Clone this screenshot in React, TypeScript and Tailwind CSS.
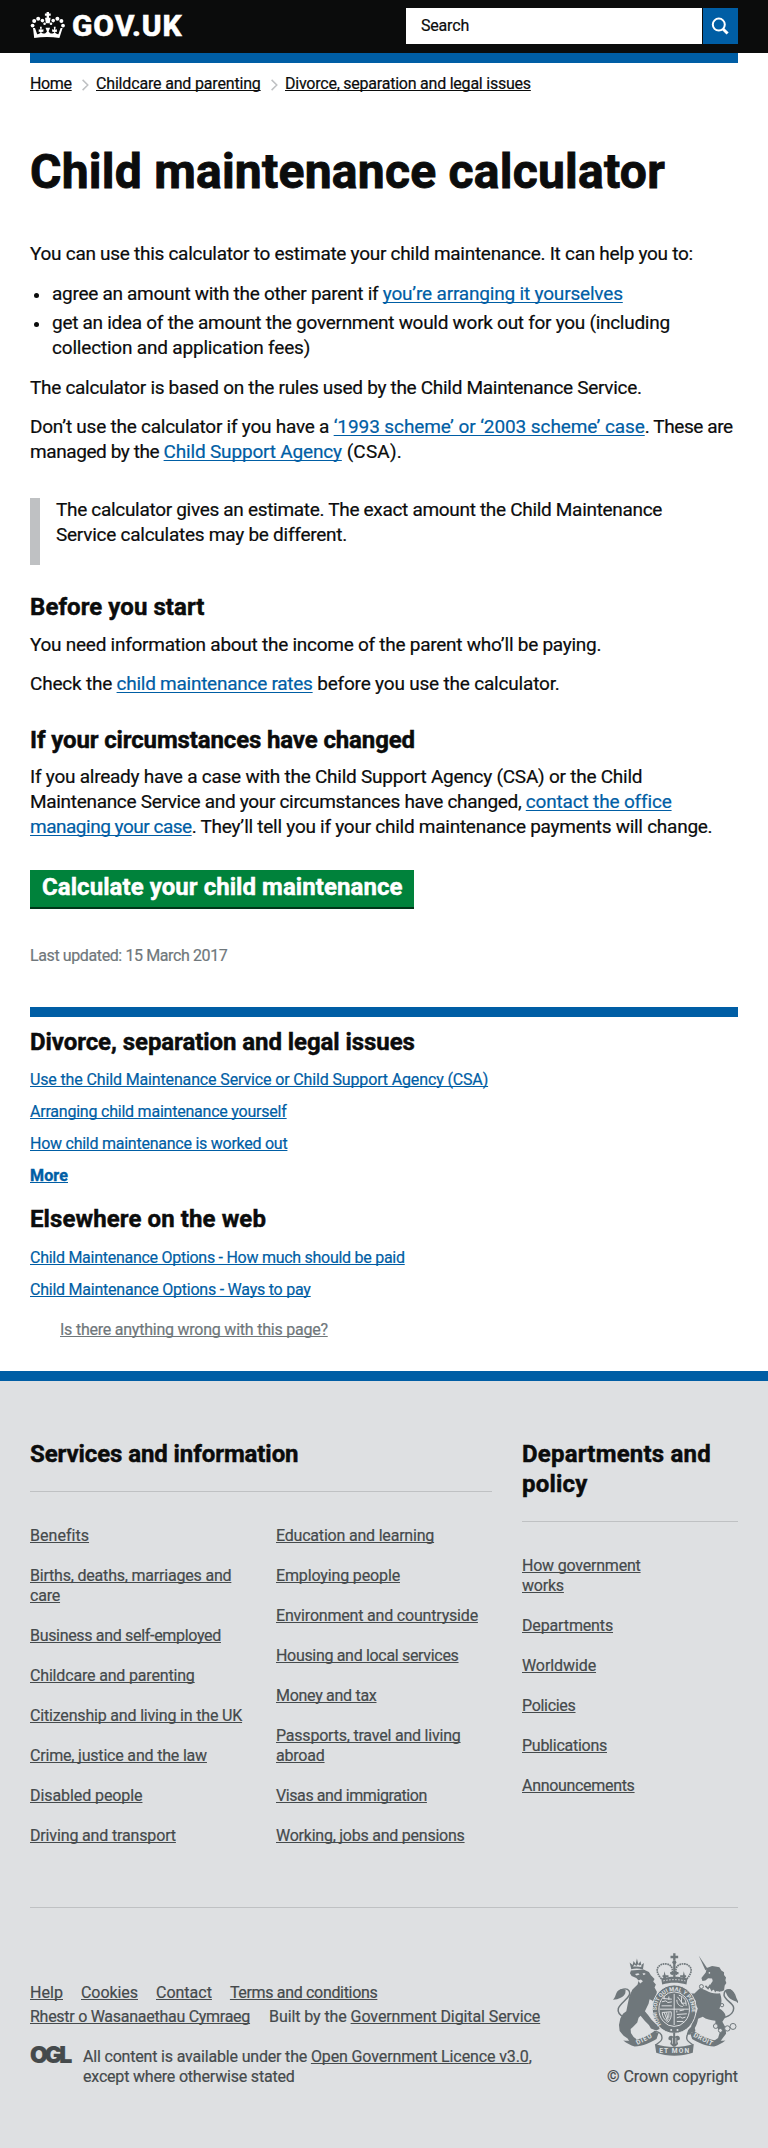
import type { ReactNode } from "react";

const linkBase = "underline decoration-1 [text-decoration-skip-ink:none]";
const headingBase = "text-[24px] leading-[30px] font-bold [-webkit-text-stroke:0.45px]";

function BodyLink({ t, children }: { t: string; children: ReactNode }) {
  return (
    <a href="#" className={`${linkBase} underline-offset-2 text-[#005ea5] ${t}`}>
      {children}
    </a>
  );
}

function SmallLink({ t, children }: { t: string; children: ReactNode }) {
  return (
    <a href="#" className={`${linkBase} underline-offset-1 ${t}`}>
      {children}
    </a>
  );
}

function Crown() {
  return (
    <svg width="36" height="27" viewBox="30 12 36 27" className="mt-[12px] shrink-0" fill="#fff">
      <path d="M46.6 12h2.4v1.6h1.7v2.2H49v2h1.6l-.9 5.4h-3.8l-.9-5.4h1.6v-2h-1.7v-2.2h1.7z" />
      <circle cx="32.6" cy="25.6" r="1.9" />
      <circle cx="34.2" cy="21" r="2" />
      <circle cx="38.2" cy="18.8" r="2" />
      <circle cx="42.4" cy="20.6" r="1.8" />
      <circle cx="44.6" cy="23.8" r="1.3" />
      <circle cx="51" cy="23.8" r="1.3" />
      <circle cx="53.2" cy="20.6" r="1.8" />
      <circle cx="57.4" cy="18.8" r="2" />
      <circle cx="61.4" cy="21" r="2" />
      <circle cx="63" cy="25.6" r="1.9" />
      <path d="M33 28h2l2.200 6.200c1.600.1 3-.8 3.400-2.200l-2-.2.2-2.600 1.600.5-.5-3h1.900l-.3 3 2-.5-.1 2.600-2.300.2c1 1.600 3 2 4.600 1l1.300-1.500-1.500-3.800h4.600l-1.500 3.800 1.300 1.500c1.600 1 3.600.6 4.600-1l-2.300-.2-.1-2.600 2 .5-.3-3h1.900l-.5 3 1.600-.5.2 2.600-2 .2c.4 1.400 1.800 2.300 3.400 2.200l2.200-6.200h2l-3.200 10c-8-1.200-17-1.200-25.200 0z" />
    </svg>
  );
}

function Chevron() {
  return (
    <svg width="7" height="12" viewBox="0 0 7 12" className="mt-[5px] shrink-0" fill="none" stroke="#bfc1c3" strokeWidth="1.5">
      <path d="M.6.9 5.800 6 .6 11.100" />
    </svg>
  );
}

function Crest() {
  return (
    <svg width="125" height="103" viewBox="68 68 376 308" className="block [-webkit-text-stroke:0]" fill="#6f777b" stroke="none">
      <defs>
        <path id="garter" d="M213 282A53 60 0 1 1 291 282" />
      </defs>

      {/* lion */}
      <path d="M123 116l-5-20 9 7 3-12 6 9 4-16 4 16 7-8 2 11 8-6-3 20c-12-4-24-4-35-1z" />
      <path d="M128 108l5-6 5 4 5-5 5 4 6-3-1 7c-9-2-17-2-25-1z" fill="#dee0e2" />
      <path d="M122 120L160 117L176 124L182 134L193 145L189 153L197 162L193 171L200 184L198 196L206 208L204 216L196 222L186 210L178 206L175 220L168 234L164 242L174 254L184 268L196 280L206 286L208 296L198 300L182 294L176 284L164 272L151 256L145 262L141 276L128 290L121 296L122 308L130 320L138 326L137 334L118 334L112 324L100 316L88 302L86 284L90 264L98 250L108 242L112 222L117 198L126 178L142 162L145 150L138 142L124 136L119 128Z" />
      <path d="M134 130l10-2 4 4-9 3zM157 128l8 0 0 4-6 1zM143 150l9-3 6 5-8 7z" fill="#dee0e2" />
      <path d="M104 262c-15-7-23-17-20-28 5-15 26-26 33-40 4-9-2-19-12-19-10 0-16 4-22 12" fill="none" stroke="#6f777b" strokeWidth="4.500" />
      <path d="M106 178c-12-6-24 0-28 10-3 8-4 13-10 20 18-2 31-8 37-20z" />

      {/* unicorn */}
      <path d="M326 75l27 40-7 4z" />
      <path d="M350 112l16-6 10 2 12 2 6 10 8 5 0 8 6 8-2 8 3 8-5 8-2 14c-12 8-30 2-46-10l12-18-2-7-12-1-8 7-9 1-3-9 13-16z" />
      <circle cx="358" cy="127" r="2.500" fill="#dee0e2" />
      <path d="M346 166l8 8 5-8 6 12 7-9 4 12 8-8 6 9" fill="none" stroke="#6f777b" strokeWidth="5" />
      <path d="M330 172l18 8c12 8 28 10 42 8 6 16 6 32-2 46 10 6 18 14 19 24l-10 16 10 18 1 18-12 16-10 14-18 3 4-12 12-8 6-20-14-18 0-14c-14-2-28-4-38-12l-14 6c-2 10-4 18-10 28l2 8-12 4-4 8-10-2 4-12 9-10 6-28c8-10 12-18 14-28-6-6-6-14-6-22l-12-11-14 0 2 16 7 12-7 7-12-12 2-26-8-10 4-8 12 2 4 8 18 0z" />
      <path d="M400 262c24-6 34-20 30-34-4-12-26-20-28-34 0-10 6-16 14-16 8 0 14 8 18 16 2 8 4 14 10 22" fill="none" stroke="#6f777b" strokeWidth="4.500" />
      <path d="M406 180c12-8 22-2 26 10 2 8 6 14 11 24-18-4-32-12-37-34z" />
      <g fill="#dee0e2" stroke="#6f777b" strokeWidth="3">
        <circle cx="334" cy="168" r="6" />
        <circle cx="377" cy="287" r="7" />
        <circle cx="391" cy="300" r="6" />
        <circle cx="412" cy="294" r="8" />
        <circle cx="429" cy="288" r="9" />
        <circle cx="396" cy="224" r="5" />
      </g>

      {/* imperial crown */}
      <path d="M249 68h7v7h8v8h-8v7h-7v-7h-8v-8h8z" />
      <circle cx="252.500" cy="95" r="6" />
      <g fill="none" stroke="#6f777b" strokeWidth="5" strokeDasharray="5 2">
        <path d="M214 145c-14-16-17-28-8-38 12-12 34-8 39 4 3 7 2 16 0 24" />
        <path d="M290 145c14-16 17-28 8-38-12-12-34-8-39 4-3 7-2 16 0 24" />
      </g>
      <path d="M249 98h7v46h-7z" />
      <path d="M240 124h25v7h-25zM217 134h18v5h-18zM270 134h18v5h-18zM223 122l6 24h-11zM281 122l6 24h-11z" />
      <path d="M213 144c26-7 53-7 79 0l-3 18c-24-7-50-7-73 0z" />
      <path d="M219 151c22-5 45-5 67 0" fill="none" stroke="#dee0e2" strokeWidth="2.500" strokeDasharray="5 4" />

      {/* garter and shield */}
      <ellipse cx="252" cy="236" rx="66" ry="73" stroke="#dee0e2" strokeWidth="3" />
      <ellipse cx="252" cy="236" rx="46" ry="52" fill="none" stroke="#dee0e2" strokeWidth="3" />
      <text className="font-['Roboto'] text-[17px] font-bold" fill="#dee0e2">
        <textPath href="#garter">HONI SOIT QUI MAL Y PENSE</textPath>
      </text>
      <path d="M208 236h88M252 190v94" stroke="#dee0e2" strokeWidth="3" />
      <g fill="none" stroke="#dee0e2" strokeWidth="3">
        <path d="M219 204l26 2M215 214l12-3 6 5 12-2M214 226h31M222 196v10M236 198v10" />
        <path d="M260 240v6M268 241l14-3M260 252l30-2M260 262l10-3 6 4 10-3M260 273h20" />
        <path d="M262 199l20 27M266 194c18 6 22 16 22 32M260 208c0 12 8 20 18 20M274 200v18h14" />
        <path d="M216 246l27-2c2 12-2 24-10 32M222 246l10 26M229 246l5 22M236 246v16M216 246c0 12 6 20 16 29" />
      </g>
      <circle cx="243" cy="299" r="3" fill="#dee0e2" />
      <circle cx="262" cy="299" r="3" fill="#dee0e2" />

      {/* thistle and motto ribbon */}
      <path d="M249 308h6v10c8-5 16 0 14 9l-8 4 3 10-9 8h-6l-9-8 3-10-8-4c-2-9 6-14 14-9z" />
      <path d="M247 322v18M257 322v18" stroke="#dee0e2" strokeWidth="2" />
      <path d="M99 330c28 6 66-8 92-27l14 5-6 18c-16 10-42 22-66 22-12-3-24-10-34-18z" />
      <path d="M406 330c-28 6-66-8-92-27l-14 5 6 18c16 10 42 22 66 22 12-3 24-10 34-18z" />
      <path d="M191 303c16 0 26 8 24 22-1 8-10 12-18 18M314 303c-16 0-26 8-24 22 1 8 10 12 18 18" fill="none" stroke="#6f777b" strokeWidth="4" />
      <path d="M194 341c38 12 78 12 117 0l-3 26c-36 12-76 12-110 0z" />
      <g className="font-['Roboto'] text-[20px] font-bold" fill="#dee0e2">
        <text x="207" y="368" textLength="90">ET MON</text>
        <text x="142" y="344" textLength="50" transform="rotate(-28 142 344)">DIEU</text>
        <text x="309" y="318" textLength="62" transform="rotate(27 309 318)">DROIT</text>
      </g>
    </svg>
  );
}

type Item = [string, string, string?];

const services: Item[] = [
  ["Benefits", "tracking-[0.04px]"],
  ["Births, deaths, marriages and", "tracking-[-0.2px]", "care"],
  ["Business and self-employed", "tracking-[-0.32px]"],
  ["Childcare and parenting", "tracking-[-0.17px]"],
  ["Citizenship and living in the UK", "tracking-[-0.18px]"],
  ["Crime, justice and the law", "tracking-[-0.19px]"],
  ["Disabled people", "tracking-[-0.08px]"],
  ["Driving and transport", "tracking-[-0.15px]"],
];
const services2: Item[] = [
  ["Education and learning", "tracking-[-0.2px]"],
  ["Employing people", "tracking-[-0.14px]"],
  ["Environment and countryside", "tracking-[-0.19px]"],
  ["Housing and local services", "tracking-[-0.32px]"],
  ["Money and tax", "tracking-[-0.29px]"],
  ["Passports, travel and living", "tracking-[-0.21px]", "abroad"],
  ["Visas and immigration", "tracking-[-0.41px]"],
  ["Working, jobs and pensions", "tracking-[-0.24px]"],
];
const departments: Item[] = [
  ["How government", "tracking-[-0.21px]", "works"],
  ["Departments", "tracking-[-0.14px]"],
  ["Worldwide", "tracking-[-0.09px]"],
  ["Policies", "tracking-[-0.3px]"],
  ["Publications", "tracking-[-0.26px]"],
  ["Announcements", "tracking-[-0.31px]"],
];

function FooterList({ items }: { items: Item[] }) {
  return (
    <ul className="flex flex-1 flex-col gap-5">
      {items.map(([a, t, b]) => (
        <li key={a}>
          <SmallLink t={t}>
            {a}
            {b && (
              <>
                <br />
                {b}
              </>
            )}
          </SmallLink>
        </li>
      ))}
    </ul>
  );
}

export default function App() {
  return (
    <div className="min-h-[2148px] w-[768px] whitespace-nowrap bg-white font-['Roboto',sans-serif] text-[16px] leading-[20px] font-[450] text-[#0b0c0c] [-webkit-text-stroke:0.2px]">
      <header className="flex h-[53px] justify-between bg-[#0b0c0c] px-[30px]">
        <a href="#" className="flex gap-[6px] text-white">
          <Crown />
          <span className="mt-[10px] text-[30px] leading-[32px] font-extrabold tracking-[0.9px] [-webkit-text-stroke:0.5px]">GOV.UK</span>
        </a>
        <form className="mt-2 flex h-9 w-[332px] gap-px">
          <div className="flex flex-1 items-center bg-white pl-[15px] tracking-[-0.19px]">Search</div>
          <button type="button" className="flex w-[35px] bg-[#005ea5] pt-[8px] pl-[8px]">
            <svg width="20" height="20" viewBox="0 0 20 20" fill="none" stroke="#fff">
              <circle cx="7.800" cy="8.600" r="6" strokeWidth="2" />
              <path d="M12 13l4.600 4.500" strokeWidth="3" />
            </svg>
          </button>
        </form>
      </header>

      <div className="px-[30px]">
        <div className="h-[10px] bg-[#005ea5]" />
        <nav className="flex h-5 pt-[11px] text-[#0b0c0c]">
          <div className="w-[52px]"><SmallLink t="tracking-[-0.34px]">Home</SmallLink></div>
          <Chevron />
          <div className="ml-[7px] w-[175px]"><SmallLink t="tracking-[-0.17px]">Childcare and parenting</SmallLink></div>
          <Chevron />
          <div className="ml-[7px]"><SmallLink t="tracking-[-0.23px]">Divorce, separation and legal issues</SmallLink></div>
        </nav>

        <h1 className="mt-[64px] text-[48px] leading-[50px] font-bold tracking-[0.25px] [-webkit-text-stroke:0.9px]">Child maintenance calculator</h1>

        <div className="mt-[44px] text-[19px] leading-[25px]">
          <p className="tracking-[-0.28px]">You can use this calculator to estimate your child maintenance. It can help you to:</p>
          <ul className="mt-[15px] flex flex-col gap-1">
            <li className="flex">
              <i className="mt-[12px] ml-1 size-[5px] rounded-full bg-[#0b0c0c]" />
              <div className="ml-[13px]">
                <span className="tracking-[-0.29px]">{"agree an amount with the other parent if "}</span>
                <BodyLink t="tracking-[-0.18px]">you’re arranging it yourselves</BodyLink>
              </div>
            </li>
            <li className="flex">
              <i className="mt-[12px] ml-1 size-[5px] rounded-full bg-[#0b0c0c]" />
              <div className="ml-[13px]">
                <span className="tracking-[-0.28px]">get an idea of the amount the government would work out for you (including</span>
                <br />
                <span className="tracking-[-0.19px]">collection and application fees)</span>
              </div>
            </li>
          </ul>
          <p className="mt-[15px] tracking-[-0.3px]">The calculator is based on the rules used by the Child Maintenance Service.</p>
          <p className="mt-[14px]">
            <span className="tracking-[-0.24px]">{"Don’t use the calculator if you have a "}</span>
            <BodyLink t="tracking-[-0.09px]">‘1993 scheme’ or ‘2003 scheme’ case</BodyLink>
            <span className="tracking-[-0.41px]">. These are</span>
            <br />
            <span className="tracking-[-0.41px]">{"managed by the "}</span>
            <BodyLink t="tracking-[-0.18px]">Child Support Agency</BodyLink>
            <span className="tracking-[0.16px]"> (CSA).</span>
          </p>
          <div className="mt-[34px] flex h-[67px] items-start border-l-[10px] border-[#bfc1c3] pl-4">
            <p className="-mt-px">
              <span className="tracking-[-0.31px]">The calculator gives an estimate. The exact amount the Child Maintenance</span>
              <br />
              <span className="tracking-[-0.25px]">Service calculates may be different.</span>
            </p>
          </div>
          <h2 className={`mt-[27px] tracking-[0.06px] ${headingBase}`}>Before you start</h2>
          <p className="mt-[10px] tracking-[-0.26px]">You need information about the income of the parent who’ll be paying.</p>
          <p className="mt-[14px]">
            <span className="tracking-[-0.21px]">{"Check the "}</span>
            <BodyLink t="tracking-[-0.26px]">child maintenance rates</BodyLink>
            <span className="tracking-[-0.19px]"> before you use the calculator.</span>
          </p>
          <h2 className={`mt-[29px] tracking-[-0.13px] ${headingBase}`}>If your circumstances have changed</h2>
          <p className="mt-[9px]">
            <span className="tracking-[-0.24px]">If you already have a case with the Child Support Agency (CSA) or the Child</span>
            <br />
            <span className="tracking-[-0.31px]">{"Maintenance Service and your circumstances have changed, "}</span>
            <BodyLink t="tracking-[-0.17px]">contact the office</BodyLink>
            <br />
            <BodyLink t="tracking-[-0.49px]">managing your case</BodyLink>
            <span className="tracking-[-0.26px]">. They’ll tell you if your child maintenance payments will change.</span>
          </p>
        </div>

        <a href="#" className={`mt-[31px] block h-[39px] w-[384px] border-b-2 border-[#003618] bg-[#00823b] pt-[2px] pl-3 tracking-[0.06px] text-white ${headingBase}`}>
          Calculate your child maintenance
        </a>
        <p className="mt-[37px] tracking-[-0.39px] text-[#6f777b]">Last updated: 15 March 2017</p>

        <aside className="mt-[41px] border-t-[10px] border-[#005ea5] pt-[10px]">
          <h2 className={`tracking-[-0.07px] ${headingBase}`}>Divorce, separation and legal issues</h2>
          <ul className="mt-[13px] flex flex-col gap-3 text-[#005ea5]">
            <li><SmallLink t="tracking-[-0.14px]">Use the Child Maintenance Service or Child Support Agency (CSA)</SmallLink></li>
            <li><SmallLink t="tracking-[-0.22px]">Arranging child maintenance yourself</SmallLink></li>
            <li><SmallLink t="tracking-[-0.25px]">How child maintenance is worked out</SmallLink></li>
            <li><SmallLink t="font-bold tracking-[0.15px] [-webkit-text-stroke:0.4px]">More</SmallLink></li>
          </ul>
          <h2 className={`mt-[18px] tracking-[0.09px] ${headingBase}`}>Elsewhere on the web</h2>
          <ul className="mt-[14px] flex flex-col gap-3 text-[#005ea5]">
            <li><SmallLink t="tracking-[-0.27px]">Child Maintenance Options - How much should be paid</SmallLink></li>
            <li><SmallLink t="tracking-[-0.23px]">Child Maintenance Options - Ways to pay</SmallLink></li>
          </ul>
          <p className="mt-5 pl-[30px] text-[#6f777b]">
            <SmallLink t="tracking-[-0.23px]">Is there anything wrong with this page?</SmallLink>
          </p>
        </aside>
      </div>

      <footer className="mt-[31px] h-[777px] border-t-[10px] border-[#005ea5] bg-[#dee0e2] px-[30px] pt-[58px] text-[#454a4c]">
        <div className="flex h-[469px] gap-[30px] border-b border-[#bfc1c3]">
          <section className="w-[462px]">
            <h2 className={`border-b border-[#bfc1c3] pb-[22px] tracking-[-0.09px] text-[#0b0c0c] ${headingBase}`}>Services and information</h2>
            <div className="mt-[34px] flex gap-[30px]">
              <FooterList items={services} />
              <FooterList items={services2} />
            </div>
          </section>
          <section className="w-[216px]">
            <h2 className={`mb-[34px] border-b border-[#bfc1c3] pb-[22px] tracking-[0.21px] text-[#0b0c0c] ${headingBase}`}>
              Departments and
              <br />
              policy
            </h2>
            <FooterList items={departments} />
          </section>
        </div>

        <div className="mt-[45px] flex justify-between">
          <div className="pt-[30px]">
            <div className="flex gap-[18px]">
              <SmallLink t="tracking-[0.05px]">Help</SmallLink>
              <SmallLink t="tracking-[-0.06px]">Cookies</SmallLink>
              <SmallLink t="">Contact</SmallLink>
              <SmallLink t="tracking-[-0.33px]">Terms and conditions</SmallLink>
            </div>
            <div className="mt-1 flex gap-[19px]">
              <SmallLink t="tracking-[-0.27px]">Rhestr o Wasanaethau Cymraeg</SmallLink>
              <div>
                <span className="tracking-[-0.09px]">{"Built by the "}</span>
                <SmallLink t="tracking-[-0.09px]">Government Digital Service</SmallLink>
              </div>
            </div>
            <div className="mt-5 flex">
              <a href="#" className="w-[53px] font-['Inter'] text-[23px] leading-[16px] font-black tracking-[-3px]">OGL</a>
              <p>
                <span className="tracking-[-0.18px]">{"All content is available under the "}</span>
                <SmallLink t="tracking-[-0.12px]">Open Government Licence v3.0</SmallLink>,
                <br />
                <span className="tracking-[-0.19px]">except where otherwise stated</span>
              </p>
            </div>
          </div>
          <div className="flex flex-col items-end">
            <Crest />
            <span className="mt-[11px] tracking-[-0.09px]">© Crown copyright</span>
          </div>
        </div>
      </footer>
    </div>
  );
}
